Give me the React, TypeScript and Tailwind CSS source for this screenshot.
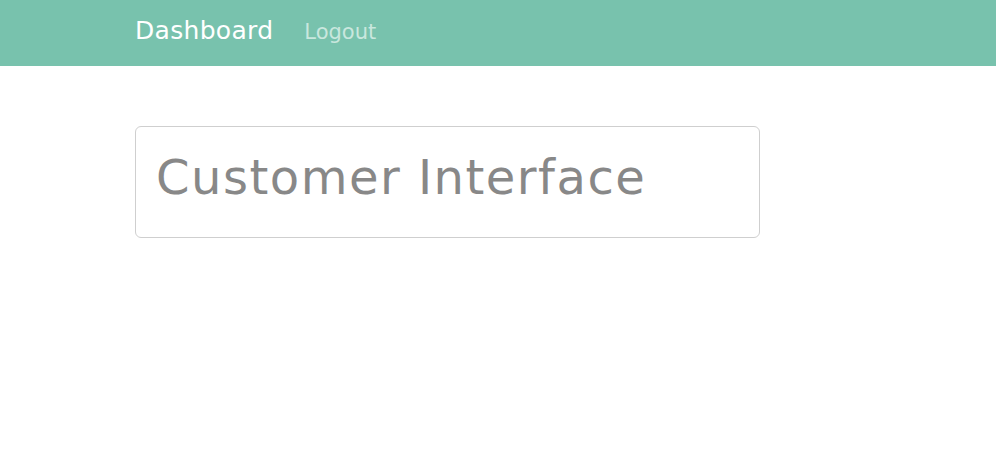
const App = () => {
  return (
    <div className="min-h-screen bg-white font-['DejaVu_Sans',sans-serif]">
      {/* Navbar */}
      <nav className="h-[66px] bg-[#78c2ad] flex items-baseline pl-[135px] pt-[18px] gap-[31px]">
        <span className="text-[25px] text-white leading-none tracking-[0.3px]">Dashboard</span>
        <span className="text-[21px] text-[#c9e7de] leading-none">Logout</span>
      </nav>

      {/* Content */}
      <div className="pl-[135px] pt-[60px]">
        <div className="w-[625px] h-[112px] border border-[#cfcfcf] rounded-[6px] pl-[20px] pt-[26px]">
          <h1 className="text-[48px] text-[#888888] leading-none tracking-[1.5px]">Customer Interface</h1>
        </div>
      </div>
    </div>
  );
};

export default App;
